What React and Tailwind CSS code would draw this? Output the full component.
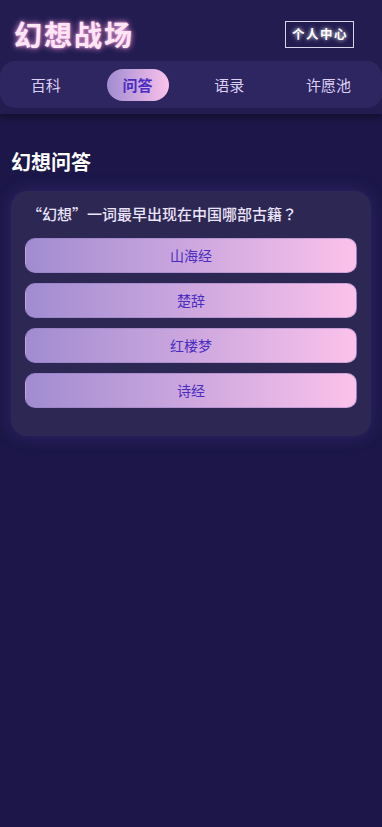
export default function App() {
  const options = ["山海经", "楚辞", "红楼梦", "诗经"];
  const tabs = ["百科", "问答", "语录", "许愿池"];
  return (
    <div
      className="min-h-screen bg-[#1c1748]"
      style={{ fontFamily: '"Noto Sans CJK SC", "Noto Sans CJK TC", sans-serif' }}
    >
      <header className="bg-[#221c50] pb-[6px] shadow-[0_4px_6px_rgba(0,0,0,0.35)]">
        <div className="flex items-center justify-between pl-[14px] pr-[28px] pt-[18px]">
          <h1 className="text-[28px] font-bold leading-[32px] tracking-[2px] text-[#fde6f6] [text-shadow:0_0_6px_#ff9ee0,0_0_2px_#ffb8e8]">
            幻想战场
          </h1>
          <button className="flex h-[27px] items-center border-[1.5px] border-[#d8d4e8] pl-[6px] pr-[5px] text-[12.5px] font-bold tracking-[1.5px] text-white [text-shadow:0_0_4px_#ffffff]">
            个人中心
          </button>
        </div>
        <nav className="mt-[11px] flex h-[47px] items-center justify-around rounded-[15px] bg-[#2e2660]">
          {tabs.map((t) =>
            t === "问答" ? (
              <span
                key={t}
                className="rounded-full bg-gradient-to-r from-[#a18cd1] to-[#fbc2eb] px-4 py-[5px] text-[15px] font-bold leading-[22px] text-[#4a2dbf]"
              >
                {t}
              </span>
            ) : (
              <span key={t} className="px-4 py-[5px] text-[15px] font-normal leading-[22px] text-[#dcd0f4]">
                {t}
              </span>
            )
          )}
        </nav>
      </header>
      <main className="px-[11px]">
        <h2 className="mt-[34px] text-[20px] font-bold leading-[28px] text-white">幻想问答</h2>
        <div className="mt-[15px] rounded-[16px] bg-[#2c2853] px-[14px] pb-[28px] pt-[12px] shadow-[0_0_16px_rgba(70,55,150,0.45)]">
          <p
            className="pl-[2px] text-[15px] font-medium leading-[22px] text-[#ece4fa]"
            style={{ fontFamily: '"Noto Sans CJK TC", "Noto Sans CJK SC", sans-serif' }}
          >
            “幻想”一词最早出现在中国哪部古籍？
          </p>
          <div className="mt-[13px] flex flex-col gap-[10px]">
            {options.map((o) => (
              <button
                key={o}
                className="flex h-[35px] w-full items-center justify-center rounded-[10px] border border-[#8a74b8]/40 bg-gradient-to-r from-[#a18cd1] to-[#fbc2eb] text-[14px] text-[#4a2dbf]"
              >
                {o}
              </button>
            ))}
          </div>
        </div>
      </main>
    </div>
  );
}
